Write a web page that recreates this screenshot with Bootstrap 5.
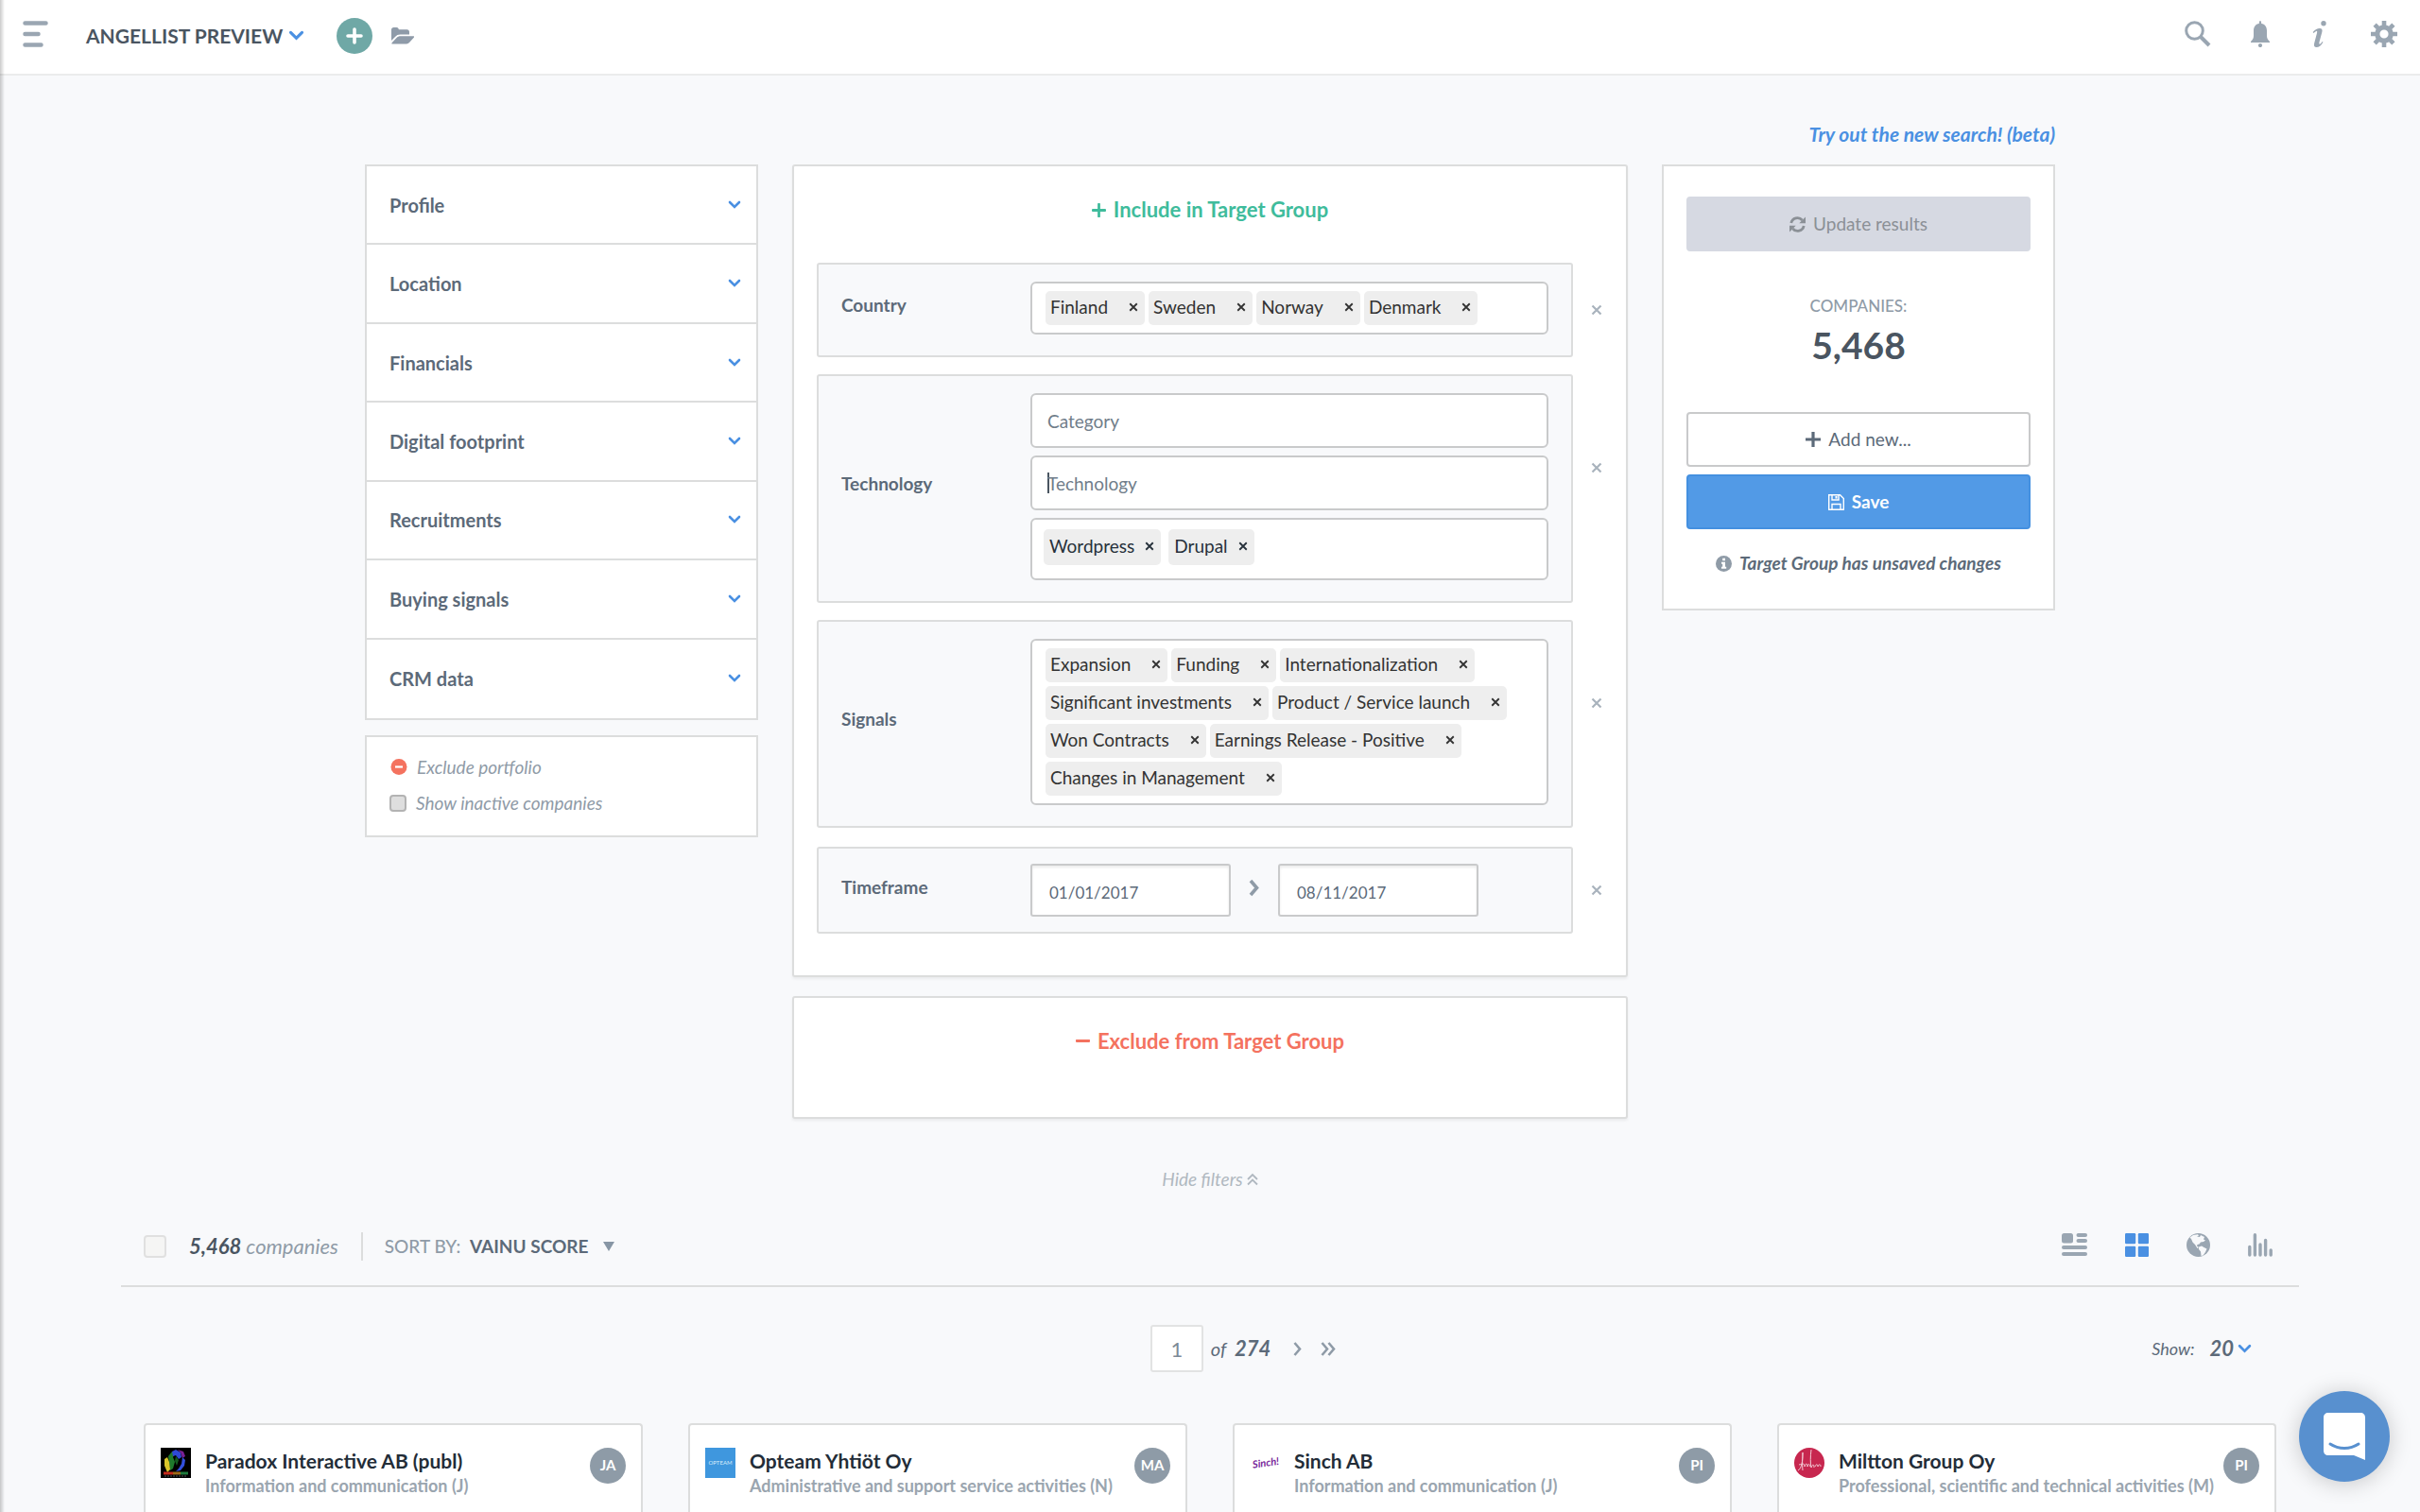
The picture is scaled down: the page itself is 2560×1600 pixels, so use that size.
<!DOCTYPE html>
<html lang="en">
<head>
<meta charset="utf-8">
<meta name="viewport" content="width=device-width, initial-scale=1">
<title>Angellist preview</title>
<link rel="stylesheet" href="https://cdn.jsdelivr.net/npm/bootstrap@5.3.0/dist/css/bootstrap.min.css">
<script src="https://cdn.jsdelivr.net/npm/bootstrap@5.3.0/dist/js/bootstrap.bundle.min.js"></script>
<style>
:root{--line:#dcdddd;--field:#c9cacb;--muted:#8f9ba7;--icon:#9aa6b2;--ink:#5c6a79;--dark:#4a5561;--blue:#4a90e2}
body{background:#f8f9fb;color:var(--ink);font-family:Lato,"Open Sans",sans-serif;font-size:19px;line-height:24px}
body::before{content:"";position:fixed;inset:0 auto 0 0;width:5px;background:linear-gradient(90deg,rgba(0,0,0,.2),transparent);z-index:5}
svg{display:block;flex:none}
.bare{border:0;background:none;padding:0;color:inherit;font:inherit;line-height:inherit}
.topbar{height:80px;padding:0 24px 2px;border-bottom:2px solid #ebecec;background:#fff;color:var(--icon)}
.list-title{font-size:21px;font-weight:700;color:var(--dark);gap:6px;margin-left:40px}
.round-add{width:38px;height:38px;border-radius:50%;background:#6fa8a6;margin-left:34px}
.top-actions{gap:44px;padding-bottom:4px}
.finder{max-width:1788px;margin:0 auto}
.beta-link{font-size:21px;font-weight:700;font-style:italic;color:var(--blue);text-decoration:none}
.beta-line{padding:50px 0 18px;height:94px}
.finder-cols{display:grid;grid-template-columns:416fr 884fr 416fr;gap:36px;align-items:start}
.panel{background:#fff;border:2px solid var(--line)}
.facets{display:grid;grid-auto-rows:1fr;height:588px}
.facet{padding:0 16px 0 24px;font-size:20px;font-weight:700;border-bottom:2px solid var(--line)}
.facet:last-child{border-bottom:0}
.opts{margin-top:16px;padding:20px 24px;height:108px;font-style:italic;color:var(--muted)}
.opts .bare{margin-bottom:14px}
.opts .form-check-input{width:18px;height:18px;margin:0;border:2px solid #b3b3b3;border-radius:4px;background:#dedede}
.opts span{margin-left:10px}
.group-box{border-radius:3px;box-shadow:0 2px 3px rgba(0,0,0,.06)}
.group-title{font-size:22px;line-height:28px;font-weight:700;gap:8px;padding:32px 0 42px}
.t-include{color:#3fbc9c}
.t-exclude{color:#f4725f}
.exclude-box{margin-top:20px;height:130px}
.rule-list{padding:0 0 44px 24px;gap:18px}
.rule-box{flex:1 1 0;border:2px solid var(--line);border-radius:3px;background:#f8f9fb;padding:18px 24px 22px;min-width:0}
.rule-name{width:200px;flex:none;font-weight:700;padding-bottom:6px}
.drop-rule{width:50px;margin-right:6px;flex:none;color:#a9b3bd}
.lift{padding-bottom:44px}
.time-row{margin-top:2px}
.time-box{padding:16px 24px}
.field{border:2px solid var(--field);border-radius:6px;background:#fff;min-width:0}
.fbox{height:58px;padding:0 16px;color:var(--ink);width:100%}
.fbox::placeholder{color:#707d8a;opacity:1}
.fbox:focus{outline:0;caret-color:transparent;background:linear-gradient(#4a5561,#4a5561) 16px 50%/2px 22px no-repeat #fff}
.tags{padding:8px 14px;gap:4px}
.rule-box>.tags{flex:1 1 0}
.tagx{height:36px;border-radius:5px;background:#eee;color:#333;padding:0 7px 2px 5px;gap:22px}
.tags-b{padding:10px 12px 14px;gap:8px}
.tags-b .tagx{height:38px;gap:11px;color:#27313b;padding:0 7px 2px 6px}
.date{width:212px;height:56px;border-radius:3px;padding:4px 18px 0;font-size:17px;color:var(--ink);box-shadow:inset 0 2px 3px rgba(0,0,0,.08)}
.side{padding:32px 24px 36px}
.side .btn{height:58px;border-radius:4px;border-width:2px;font-size:19px;line-height:24px;gap:8px}
.b-upd,.b-upd:disabled{background:#d6d9e2;border-color:#d6d9e2;color:#8b9096;opacity:1}
.b-add{background:#fff;border-color:#c9cacb;color:var(--ink)}
.b-save,.b-save:hover{background:#529ae6;border-color:#4490e0;color:#fff;font-weight:700}
.count-cap{font-size:17px;font-weight:500;color:var(--muted);margin-top:46px}
.count-num{font-size:39px;line-height:44px;font-weight:700;color:var(--dark);margin:7px 0 49px}
.note{font-weight:700;font-style:italic;margin-top:24px;gap:8px}
.hide-line{margin-top:52px;font-style:italic;color:#b0b8c0}
.results{margin:0 5%}
.res-bar{margin-top:36px;height:66px;padding:0 28px 18px 24px;border-bottom:2px solid var(--line)}
.res-bar .form-check-input{width:24px;height:24px;margin:0;border:2px solid #e0e0e0;border-radius:4px;background:#f5f5f4}
.res-count{font-size:22px;font-style:italic;margin-left:24px;color:var(--muted)}
.res-count b{color:var(--dark)}
.sorter{border-left:2px solid var(--line);height:30px;margin-left:24px;padding-left:23px;color:var(--muted);font-weight:500}
.sorter b{color:var(--ink)}
.views{gap:40px;color:var(--icon);padding-bottom:4px}
.pager{display:grid;grid-template-columns:1fr auto 1fr;height:50px;margin:40px 50px 54px 24px;font-style:italic}
.pages{padding-left:96px}
.page-no{width:56px;height:50px;border:2px solid #e2e3e3;border-radius:3px;color:#7d8a97;font-size:22px;text-align:center;background:#fff}
.show-cap{font-size:18px}
.f20{font-size:20px}.f22{font-size:22px}
.co-grid{display:grid;grid-template-columns:repeat(4,minmax(0,1fr));gap:48px;padding:0 24px}
.co{height:94px;border-bottom:0;border-radius:4px 4px 0 0;padding:24px 16px 0;gap:15px}
.co-text{flex:1 1 0;min-width:0;white-space:nowrap}
.co-name{font-size:21px;line-height:28px;font-weight:700;color:#232d38}
.co-cat{font-size:18px;line-height:24px;font-weight:700;color:#9aa5af}
.who{width:38px;height:38px;flex:none;border-radius:50%;background:#8e9ba7;color:#fff;font-size:15px;font-weight:700;padding-bottom:2px}
.chat{position:fixed;right:32px;bottom:32px;width:96px;height:96px;border-radius:50%;background:#5890cf;box-shadow:0 2px 24px rgba(0,0,0,.2)}
</style>
</head>
<body>
<svg width="0" height="0" class="position-absolute" aria-hidden="true">
<symbol id="down" viewBox="0 0 14 10"><path d="M2 2l5 5 5-5" fill="none" stroke="#4a90e2" stroke-width="2.6" stroke-linecap="round"/></symbol>
<symbol id="cross" viewBox="0 0 12 12"><path d="M1.500 1.500l9 9M10.500 1.500l-9 9" fill="none" stroke="currentColor" stroke-width="2.200"/></symbol>
</svg>
<header class="topbar d-flex align-items-center">
  <button class="bare pb-1" aria-label="Menu"><svg width="27" height="28" viewBox="0 0 27 28" stroke="currentColor" stroke-width="4.500" stroke-linecap="round"><path d="M2.500 2.500h22M2.500 14h14M2.500 25.500h17"/></svg></button>
  <button class="bare list-title d-flex align-items-center"><span>ANGELLIST PREVIEW</span><svg width="17" height="12"><use href="#down"/></svg></button>
  <button class="bare round-add d-flex align-items-center justify-content-center" aria-label="Add"><svg width="18" height="18" viewBox="0 0 18 18" stroke="#fff" stroke-width="3.600" stroke-linecap="round"><path d="M9 2v14M2 9h14"/></svg></button>
  <button class="bare ms-3 ps-1" aria-label="Open folder"><svg width="24" height="18" viewBox="0 0 24 18" fill="#8f9ba9"><path d="M0 14V2.500C0 1 1 0 2.500 0h3C7 0 7.800 1 7.800 2.300h8.700c1.500 0 2.500 1 2.500 2.400V7.500H9.500C7 7.500 5.500 8.300 4 10z"/><path d="M1 17.500h15c1.200 0 2.200-.5 3-1.400l5-5.700c.3-.7 0-1.200-.9-1.200H10C8 9.200 6.500 9.800 5.300 11.200L.6 16.200c-.4.800-.3 1.300.4 1.300z"/></svg></button>
  <div class="top-actions ms-auto d-flex align-items-center">
    <button class="bare" aria-label="Search"><svg width="28" height="28" viewBox="-3 0 28 28" fill="none" stroke="currentColor" overflow="visible"><circle cx="10.500" cy="10.500" r="8.800" stroke-width="3"/><path d="M17 17l9 9" stroke-width="4"/></svg></button>
    <button class="bare" aria-label="Notifications"><svg width="22" height="28" viewBox="0 0 22 28" fill="currentColor"><path d="M11 0c.8 0 1.200.7 1.200 3C16 3.500 18 6.500 18 10.500V16c0 3 1.500 4.500 3 6v1H1v-1c1.500-1.500 3-3 3-6v-5.500C4 6.500 6 3.500 9.800 3 9.800.7 10.200 0 11 0z"/><circle cx="11" cy="26" r="2.100"/></svg></button>
    <button class="bare" aria-label="Info"><svg width="18" height="28" viewBox="0 0 18 28" fill="currentColor"><circle cx="12" cy="2.800" r="2.700"/><path d="M.6 12C3 9.500 5.500 8 7.800 8c2.500 0 3.200 1.600 2.600 3.800L7.500 22.500c-.5 2 .2 3 1.600 1.400l1.600-2 .8.500C9.500 26 7 28 4.500 28c-2.200 0-3-1.500-2.400-4L5 13c.6-2.300-.2-2.900-1.600-1.500l-2 1.500z"/></svg></button>
    <button class="bare" aria-label="Settings"><svg width="28" height="28" viewBox="-14 -14 28 28" fill="none" stroke="currentColor"><circle r="7.200" stroke-width="5.200"/><g stroke-width="4.600"><path d="M0-14v5M0 14V9M-14 0h5M14 0H9M-9.900-9.900l3.500 3.500M9.900 9.900L6.400 6.400M-9.900 9.900l3.500-3.500M9.900-9.900L6.400-6.400"/></g></svg></button>
  </div>
</header>
<main>
<section class="finder">
  <div class="beta-line text-end"><a class="beta-link" href="#">Try out the new search! (beta)</a></div>
  <div class="finder-cols">
    <aside>
      <div class="panel facets" id="facets"></div>
      <div class="panel opts">
        <button class="bare d-flex align-items-center fst-italic"><svg width="19" height="18" viewBox="0 0 19 18"><circle cx="10" cy="8.500" r="8.500" fill="#f4725f"/><path d="M6 8.500h8" stroke="#fff" stroke-width="2.200"/></svg><span>Exclude portfolio</span></button>
        <label class="d-flex align-items-center"><input type="checkbox" class="form-check-input"><span>Show inactive companies</span></label>
      </div>
    </aside>
    <div>
      <section class="panel group-box">
        <h2 class="group-title t-include d-flex align-items-center justify-content-center m-0"><svg width="15" height="15" viewBox="0 0 14 14" stroke="currentColor" stroke-width="2.600" stroke-linecap="round"><path d="M7 1v12M1 7h12"/></svg>Include in Target Group</h2>
        <div class="rule-list d-flex flex-column">
          <div class="d-flex"><div class="rule-box d-flex align-items-center"><span class="rule-name">Country</span><div class="field tags d-flex flex-wrap" data-tags="Finland|Sweden|Norway|Denmark"></div></div><button class="bare drop-rule d-flex align-items-center justify-content-center" aria-label="Remove Country"><svg width="12" height="12"><use href="#cross"/></svg></button></div>
          <div class="d-flex"><div class="rule-box d-flex align-items-center"><span class="rule-name">Technology</span><div class="flex-grow-1 d-flex flex-column gap-2"><input class="field fbox" placeholder="Category" aria-label="Category"><input class="field fbox" placeholder="Technology" aria-label="Technology" autofocus><div class="field tags tags-b d-flex flex-wrap" data-tags="Wordpress|Drupal"></div></div></div><button class="bare drop-rule lift d-flex align-items-center justify-content-center" aria-label="Remove Technology"><svg width="12" height="12"><use href="#cross"/></svg></button></div>
          <div class="d-flex"><div class="rule-box d-flex align-items-center"><span class="rule-name">Signals</span><div class="field tags d-flex flex-wrap" data-tags="Expansion|Funding|Internationalization|Significant investments|Product / Service launch|Won Contracts|Earnings Release - Positive|Changes in Management"></div></div><button class="bare drop-rule lift d-flex align-items-center justify-content-center" aria-label="Remove Signals"><svg width="12" height="12"><use href="#cross"/></svg></button></div>
          <div class="d-flex time-row"><div class="rule-box time-box d-flex align-items-center"><span class="rule-name">Timeframe</span><input class="field date" value="01/01/2017" aria-label="From"><svg class="mx-3" width="18" height="24" viewBox="0 0 18 24" fill="none" stroke="#8f9ba7" stroke-width="3.600"><path d="M5 2l6.500 7.500L5 17"/></svg><input class="field date" value="08/11/2017" aria-label="To"></div><button class="bare drop-rule d-flex align-items-center justify-content-center" aria-label="Remove Timeframe"><svg width="12" height="12"><use href="#cross"/></svg></button></div>
        </div>
      </section>
      <section class="panel group-box exclude-box">
        <h2 class="group-title t-exclude d-flex align-items-center justify-content-center m-0"><svg width="15" height="15" viewBox="0 0 14 14" stroke="currentColor" stroke-width="2.800" stroke-linecap="round"><path d="M1 6h12"/></svg>Exclude from Target Group</h2>
      </section>
    </div>
    <aside class="panel side">
      <button class="btn b-upd w-100 d-flex align-items-center justify-content-center" disabled><svg width="17" height="17" viewBox="0 0 17 17"><path d="M1.800 7A6.700 6.700 0 0 1 13.500 4M15.200 10A6.700 6.700 0 0 1 3.500 13" fill="none" stroke="currentColor" stroke-width="2.800"/><path d="M17 .5v6.700h-6.700zM0 16.500V9.800h6.700z" fill="currentColor"/></svg>Update results</button>
      <div class="count-cap text-center">COMPANIES:</div>
      <div class="count-num text-center">5,468</div>
      <button class="btn b-add w-100 d-flex align-items-center justify-content-center"><svg width="16" height="16" viewBox="0 0 16 16" stroke="currentColor" stroke-width="3.200"><path d="M8 0v16M0 8h16"/></svg>Add new...</button>
      <button class="btn b-save w-100 d-flex align-items-center justify-content-center mt-2"><svg width="17" height="17" viewBox="0 0 17 17" fill="none" stroke="#fff" stroke-width="1.400"><path d="M.7.700h11.800l3.800 3.800v11.800H.7zM4 .7v5.300h7V.7M4 16.300v-5.800h9v5.800"/><path d="M8.500 2v2.600" stroke-width="2"/></svg>Save</button>
      <div class="note d-flex align-items-center justify-content-center"><svg width="17" height="17" viewBox="0 0 17 17"><circle cx="8.500" cy="8.500" r="8.500" fill="#8f9ba7"/><path d="M7.200 2.800h2.800v2.400H7.200zM6 6.700h4v5h1.200v2H6v-2h1.200v-3H6z" fill="#fff"/></svg>Target Group has unsaved changes</div>
    </aside>
  </div>
</section>
<div class="hide-line d-flex justify-content-center"><button class="bare fst-italic d-flex align-items-center gap-1">Hide filters <svg width="12" height="14" viewBox="0 0 12 14" fill="none" stroke="currentColor" stroke-width="1.800"><path d="M1 7l5-5 5 5M1 12.500l5-5 5 5"/></svg></button></div>
<section class="results">
  <div class="res-bar d-flex align-items-center">
    <input type="checkbox" class="form-check-input" aria-label="Select all">
    <span class="res-count"><b>5,468</b> companies</span>
    <button class="bare sorter d-flex align-items-center"><span>SORT BY:&nbsp; <b>VAINU SCORE</b></span><svg class="ms-3" width="12" height="10" viewBox="0 0 12 10"><path d="M0 0h12L6 10z" fill="#8796a5"/></svg></button>
    <div class="views ms-auto d-flex align-items-center">
      <button class="bare" aria-label="List view"><svg width="27" height="24" viewBox="0 0 27 24" fill="currentColor"><rect width="12" height="10.500" rx="2.500"/><rect x="15.500" width="11.500" height="4" rx="2"/><rect x="15.500" y="6" width="11.500" height="4" rx="2"/><rect y="13" width="27" height="4" rx="2"/><rect y="20" width="27" height="4" rx="2"/></svg></button>
      <button class="bare" aria-label="Grid view"><svg width="25" height="25" viewBox="0 0 25 25" fill="#4a90e2"><rect width="11.200" height="11.200" rx="1.200"/><rect x="13.800" width="11.200" height="11.200" rx="1.200"/><rect y="13.800" width="11.200" height="11.200" rx="1.200"/><rect x="13.800" y="13.800" width="11.200" height="11.200" rx="1.200"/></svg></button>
      <button class="bare" aria-label="Map view"><svg width="25" height="25" viewBox="0 0 25 25"><circle cx="12.500" cy="12.500" r="12.500" fill="currentColor"/><path d="M3.500 4.500L7 2l5-.800 1 1.300-2 1 3 .5 1-2 4 2-1 2.500 2 1-2 1.500-3 .5-1.500 2-2 .5-.5 1.500 2 1.500-1.500 1L9 12 6.500 9.500 5 6z" fill="#f8f9fb"/><path d="M13 14.500l3-1 2.500 1.500 3 1.500-1.500 3.500-2.500 3.500-2 .5-.5-4.500-2-2.500z" fill="#f8f9fb"/></svg></button>
      <button class="bare" aria-label="Chart view"><svg width="26" height="25" viewBox="0 0 26 25" stroke="currentColor" stroke-width="3.400" stroke-linecap="round"><path d="M1.800 14.500v8.500M7.400 1.800V23M13 12v11M18.600 7.500V23M24.200 18v5"/></svg></button>
    </div>
  </div>
  <div class="pager align-items-center">
    <span></span>
    <div class="pages d-flex align-items-center"><input class="page-no" value="1" aria-label="Page"><span class="f20 ms-2">of <b class="f22 ms-1">274</b></span>
      <button class="bare ms-4" aria-label="Next page"><svg width="9" height="15" viewBox="0 0 9 15" fill="none" stroke="#8f9ba7" stroke-width="2.600"><path d="M1.500 1l5.500 6.500L1.500 14"/></svg></button>
      <button class="bare ms-3 ps-1" aria-label="Last page"><svg width="16" height="15" viewBox="0 0 16 15" fill="none" stroke="#8f9ba7" stroke-width="2.600"><path d="M1.500 1L7 7.500 1.500 14M8.500 1l5.500 6.500L8.500 14"/></svg></button></div>
    <div class="d-flex align-items-center justify-content-end"><span class="show-cap">Show:</span><button class="bare d-flex align-items-center fst-italic ms-3" aria-label="Results per page"><b class="f22">20</b><svg class="ms-1" width="15" height="11"><use href="#down"/></svg></button></div>
  </div>
  <div class="co-grid">
    <article class="co panel d-flex align-items-start">
      <svg width="32" height="32" viewBox="0 0 32 32"><path fill="#000" d="M0 0h32v32H0z"/><path d="M8 9l4-5 3 1-2 5 2 5-2 7-3 2-1-8z" fill="#1f7a2c"/><path d="M4 12l3-2 2 5 1 8-3 3-3-7z" fill="#d9c52a"/><path d="M12 4l4-2 5 3 1 5-3 2-3-4-3 1z" fill="#2f49d6"/><path d="M18 2l6 2 2 5-3 2-2-6z" fill="#7a2094"/><path d="M23 10l3 3-1 6-4 5-5 1 3-3 3-5z" fill="#3350dd"/><path d="M16 9l3 4-2 6-2-5z" fill="#145a20"/><path d="M3 25.500h10v3H3z" fill="#c62a1c"/><path d="M13 25.500h8v3h-8z" fill="#a06a18"/><path d="M21 25.500h8v3h-8z" fill="#1f7a3c"/><path d="M4 30h24" stroke="#555" stroke-dasharray="2 1"/></svg>
      <div class="co-text"><div class="co-name">Paradox Interactive AB (publ)</div><div class="co-cat">Information and communication (J)</div></div><span class="who d-flex align-items-center justify-content-center">JA</span>
    </article>
    <article class="co panel d-flex align-items-start">
      <svg width="32" height="32" viewBox="0 0 32 32"><path fill="#3f97de" d="M0 0h32v32H0z"/><text x="16" y="18" text-anchor="middle" font-size="6" fill="#d8ecfb">OPTEAM</text></svg>
      <div class="co-text"><div class="co-name">Opteam Yhtiöt Oy</div><div class="co-cat">Administrative and support service activities (N)</div></div><span class="who d-flex align-items-center justify-content-center">MA</span>
    </article>
    <article class="co panel d-flex align-items-start">
      <svg width="32" height="32" viewBox="0 0 32 32"><text x="17" y="20" text-anchor="middle" font-size="11" font-weight="700" font-style="italic" fill="#7a2a9c" transform="rotate(-8 16 16)">Sinch!</text></svg>
      <div class="co-text"><div class="co-name">Sinch AB</div><div class="co-cat">Information and communication (J)</div></div><span class="who d-flex align-items-center justify-content-center">PI</span>
    </article>
    <article class="co panel d-flex align-items-start">
      <svg width="32" height="32" viewBox="0 0 32 32"><circle cx="16" cy="16" r="16" fill="#c7274f"/><g fill="none" stroke="#f3c9d4" stroke-width="1"><path d="M4 24C8 22 9 14 9 5c0 6-1 12 0 19M18 2c-1 8-1 14 0 19 2-5 3-3 3 0M5 18c4-1 6-2 6 2 1-4 3-4 3 0 1-4 2-3 3 0M22 20c1-3 3-3 3 0 1-3 3-3 3 0"/></g></svg>
      <div class="co-text"><div class="co-name">Miltton Group Oy</div><div class="co-cat">Professional, scientific and technical activities (M)</div></div><span class="who d-flex align-items-center justify-content-center">PI</span>
    </article>
  </div>
</section>
</main>
<button class="bare chat d-flex align-items-center justify-content-center" aria-label="Open chat"><svg width="44" height="50" viewBox="0 0 44 50"><path d="M5 0h34c3 0 5 2 5 5v45l-12-5H5c-3 0-5-2-5-5V5c0-3 2-5 5-5z" fill="#fff"/><path d="M7 33c9 6 21 6 30 0" fill="none" stroke="#5890cf" stroke-width="3" stroke-linecap="round"/></svg></button>
<script>
document.querySelectorAll('[data-tags]').forEach(function(box){
  box.dataset.tags.split('|').forEach(function(t){
    box.insertAdjacentHTML('beforeend','<span class="tagx d-flex align-items-center"><span>'+t+'</span><button class="bare" aria-label="Remove '+t+'"><svg width="10" height="10"><use href="#cross"/></svg></button></span>');
  });
});
['Profile','Location','Financials','Digital footprint','Recruitments','Buying signals','CRM data'].forEach(function(t){
  document.getElementById('facets').insertAdjacentHTML('beforeend','<button class="bare facet w-100 d-flex align-items-center justify-content-between"><span>'+t+'</span><svg width="14" height="10"><use href="#down"/></svg></button>');
});
</script>
</body>
</html>
